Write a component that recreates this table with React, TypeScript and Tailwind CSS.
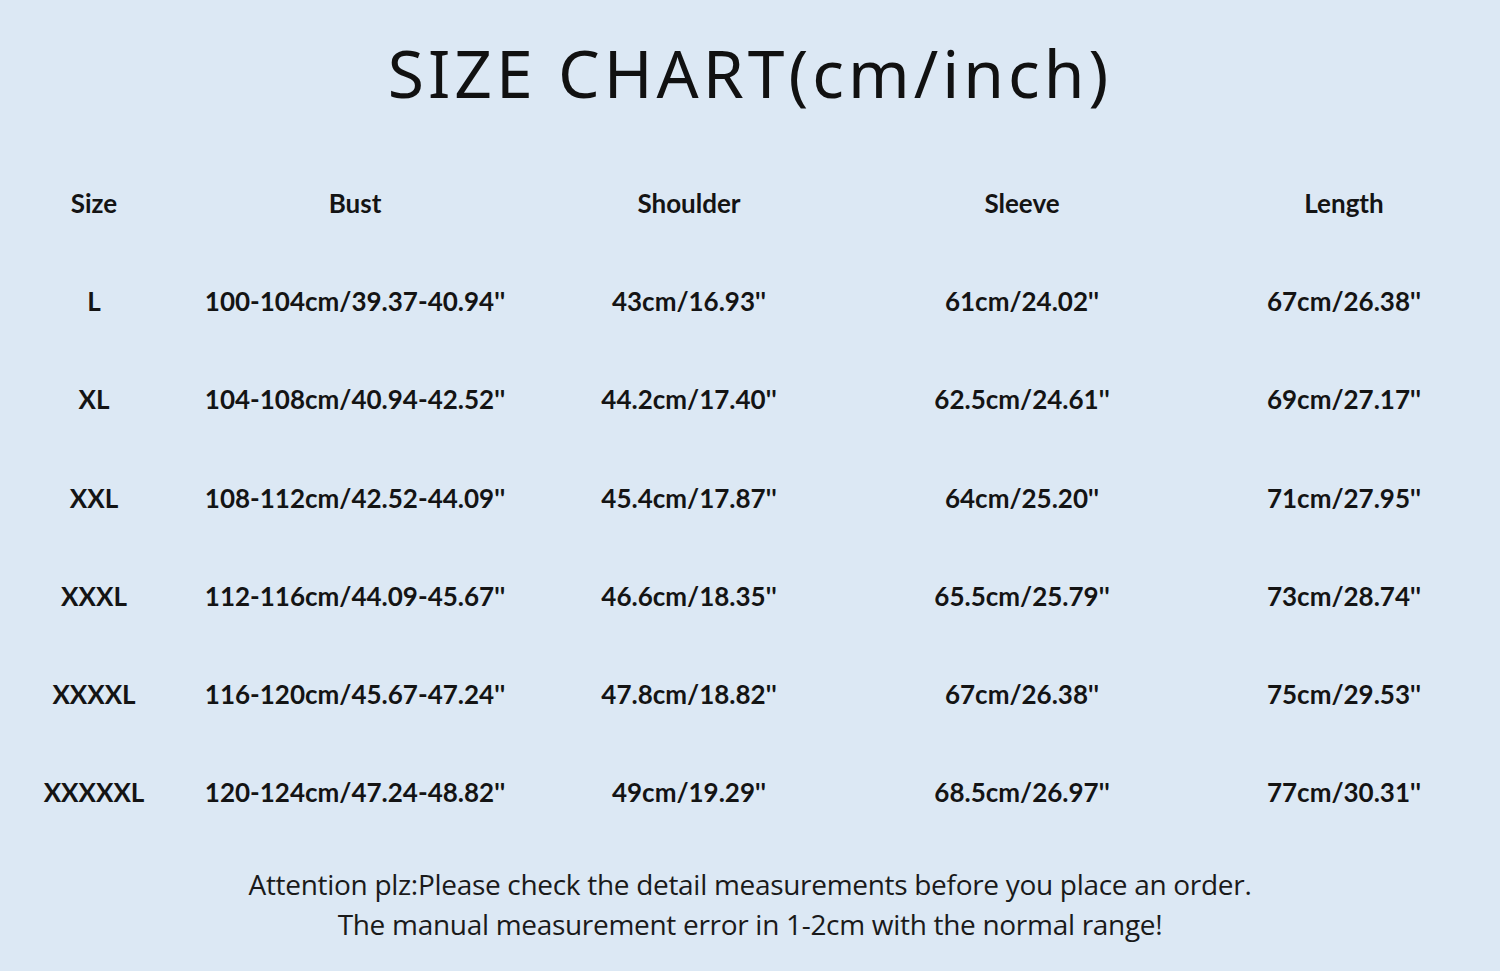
import React from "react";

const headers = ["Size", "Bust", "Shoulder", "Sleeve", "Length"];
const rows = [
  ["L", "100-104cm/39.37-40.94''", "43cm/16.93''", "61cm/24.02''", "67cm/26.38''"],
  ["XL", "104-108cm/40.94-42.52''", "44.2cm/17.40''", "62.5cm/24.61''", "69cm/27.17''"],
  ["XXL", "108-112cm/42.52-44.09''", "45.4cm/17.87''", "64cm/25.20''", "71cm/27.95''"],
  ["XXXL", "112-116cm/44.09-45.67''", "46.6cm/18.35''", "65.5cm/25.79''", "73cm/28.74''"],
  ["XXXXL", "116-120cm/45.67-47.24''", "47.8cm/18.82''", "67cm/26.38''", "75cm/29.53''"],
  ["XXXXXL", "120-124cm/47.24-48.82''", "49cm/19.29''", "68.5cm/26.97''", "77cm/30.31''"],
];

export default function App() {
  return (
    <div className="w-[1500px] h-[971px] bg-[#dce8f4] text-[#141414] flex flex-col items-center overflow-hidden">
      <h1
        className="mt-[28px] h-[88px] flex items-center text-[66px] leading-none tracking-[4px] text-[#111]"
        style={{ fontFamily: '"Noto Sans", sans-serif', fontWeight: 400 }}
      >
        SIZE CHART(cm/inch)
      </h1>
      <div
        className="mt-[38px] w-full grid grid-cols-[188px_334px_334px_332px_312px] auto-rows-[98.3px] font-bold text-[26px]"
        style={{ fontFamily: 'Lato, "Noto Sans", sans-serif' }}
      >
        {headers.map((h) => (
          <div key={h} className="flex items-center justify-center">{h}</div>
        ))}
        {rows.map((r) =>
          r.map((c, i) => (
            <div key={r[0] + i} className="flex items-center justify-center">{c}</div>
          ))
        )}
      </div>
      <div
        className="mt-[22px] flex flex-col items-center text-[28px] leading-[40px] tracking-[-0.3px] text-[#1a1a1a]"
        style={{ fontFamily: '"Open Sans", sans-serif' }}
      >
        <p>Attention plz:Please check the detail measurements before you place an order.</p>
        <p>The manual measurement error in 1-2cm with the normal range!</p>
      </div>
    </div>
  );
}
